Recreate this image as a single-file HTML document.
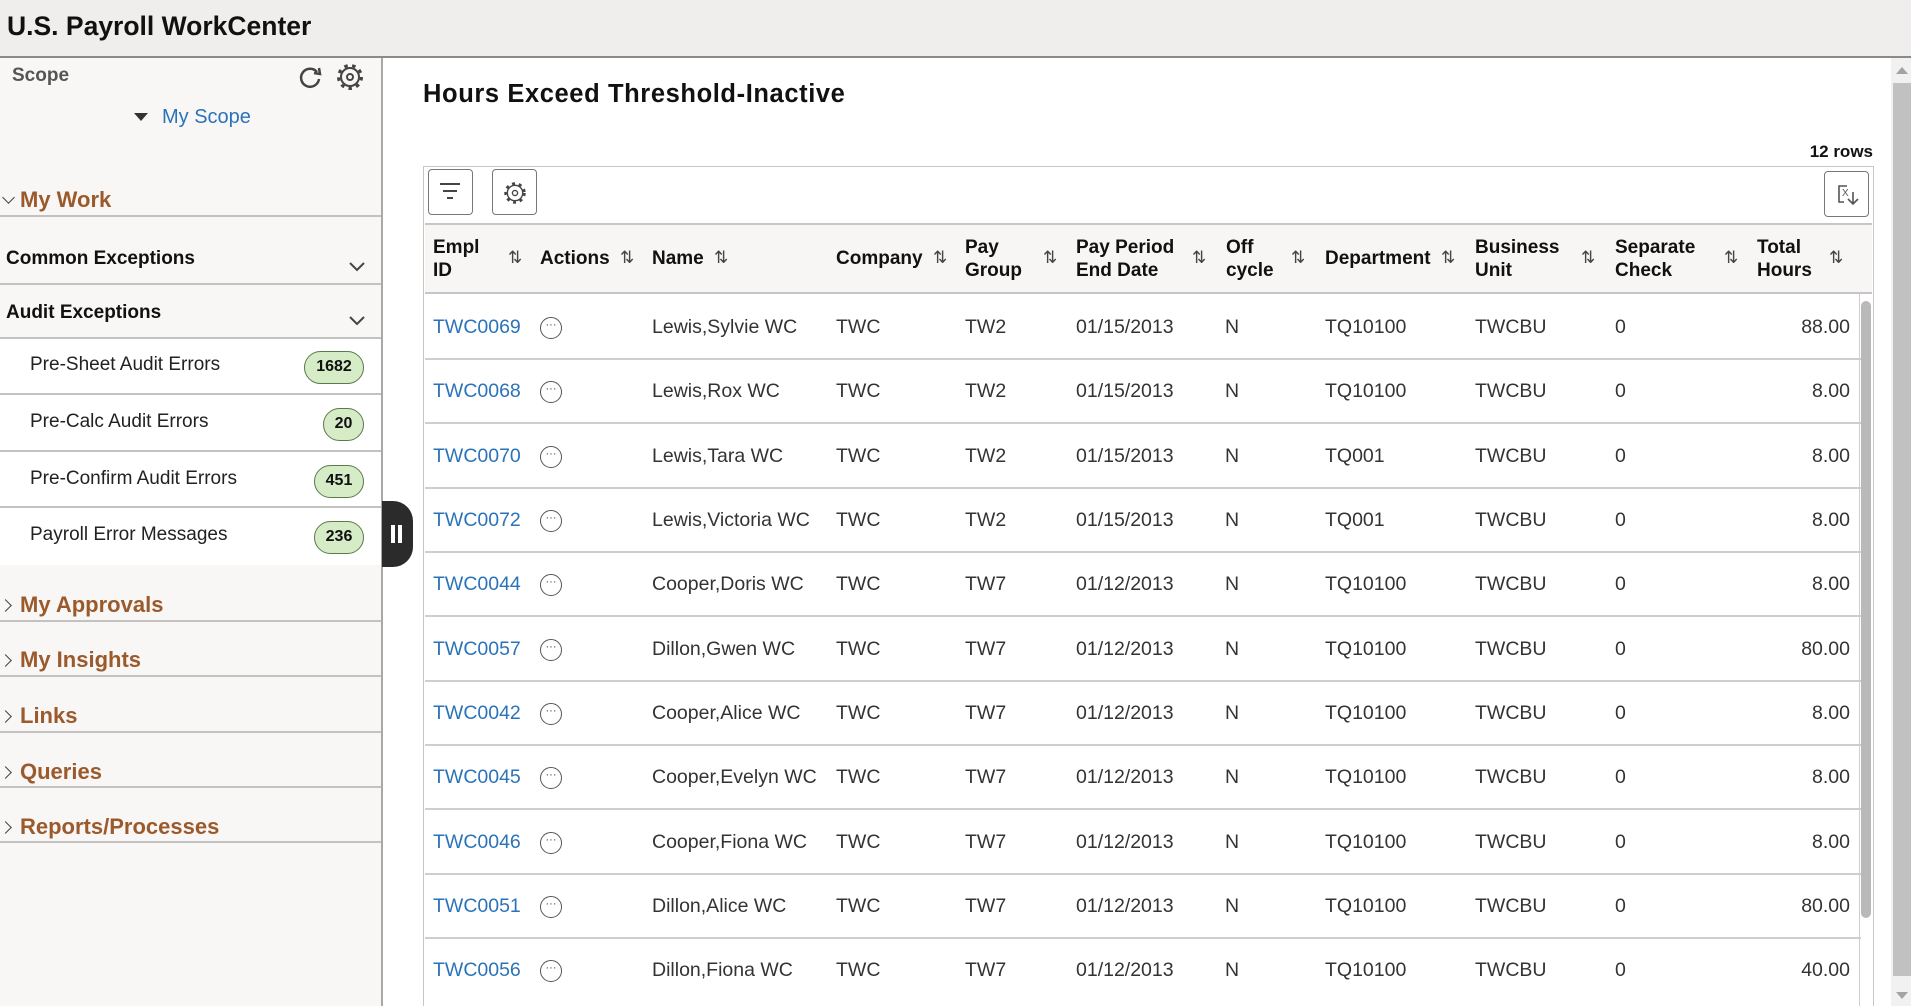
<!DOCTYPE html>
<html><head><meta charset="utf-8"><style>
*{margin:0;padding:0;box-sizing:border-box}
body{width:1911px;height:1006px;overflow:hidden;font-family:"Liberation Sans",Arial,sans-serif;background:#fff;position:relative;color:#333}
.a{position:absolute;white-space:nowrap}
#hdr{left:0;top:0;width:1911px;height:58px;background:#efeeed;border-bottom:2px solid #8a8a8a}
#side{left:0;top:58px;width:383px;height:948px;background:#f8f7f6;border-right:2px solid #a8a8a8}
.sec{position:absolute;left:0;width:381px;border-bottom:2px solid #c4c2c0}
.brown{color:#9b5a2c;font-weight:bold;font-size:22px}
.item{position:absolute;left:0;width:381px;background:#fff;border-bottom:2px solid #c4c2c0}
.badge{position:absolute;right:17px;height:33px;border:1.5px solid #5a7a4a;background:#d5ecc6;border-radius:17px;font-weight:bold;font-size:16px;color:#111;text-align:center;line-height:30px}
.th{position:absolute;top:236px;font-weight:bold;font-size:19px;color:#111;line-height:23px}
.srt{position:absolute;top:248px;font-size:17px;color:#444}
.row{position:absolute;left:425px;width:1436px;height:64px;border-bottom:2px solid #d0cecc;font-size:19.5px;color:#333}
.row span{position:absolute;top:20px;white-space:nowrap}
.lk{color:#2b73b8}
.dot{width:22px;height:22px;border:1.5px solid #555;border-radius:50%;top:21px!important;font-size:11px;line-height:14px;text-align:center;color:#444}
.chev{position:absolute;left:4px;width:9px;height:9px;border-top:1.6px solid #444;border-right:1.6px solid #444;transform:rotate(45deg)}
</style></head><body>
<div id="hdr" class="a"><div class="a" style="left:7px;top:11px;font-size:26.5px;font-weight:bold;color:#111">U.S. Payroll WorkCenter</div></div>
<div id="side" class="a">
<div class="a" style="left:12px;top:7px;font-size:19px;font-weight:bold;color:#555">Scope</div>
<svg class="a" style="left:297px;top:6px" width="26" height="26" viewBox="0 0 26 26"><path d="M20 8 A9 9 0 1 0 22 15" fill="none" stroke="#444" stroke-width="2.5"/><path d="M17 9 L23 10 L22 4" fill="none" stroke="#444" stroke-width="2.5"/></svg>
<svg class="a" style="left:336px;top:5px" width="28" height="28" viewBox="0 0 28 28"><circle cx="14" cy="14" r="9" fill="none" stroke="#444" stroke-width="2"/><circle cx="14" cy="14" r="3" fill="none" stroke="#444" stroke-width="2"/><circle cx="14" cy="14" r="11.5" fill="none" stroke="#444" stroke-width="3" stroke-dasharray="3.5 4.5"/></svg>
<div class="a" style="left:134px;top:55px;width:0;height:0;border-left:7px solid transparent;border-right:7px solid transparent;border-top:8px solid #333"></div>
<div class="a" style="left:162px;top:48px;font-size:20px;color:#2b73b8">My Scope</div>
<div class="sec" style="top:125px;height:34px"><div class="chev" style="top:10px;transform:rotate(135deg)"></div><span class="a brown" style="left:20px;top:4px">My Work</span></div>
<div class="sec" style="top:159px;height:68px"><span class="a" style="left:6px;top:31px;font-size:19px;font-weight:bold;color:#111">Common Exceptions</span><svg class="a" style="left:349px;top:45px" width="16" height="10"><path d="M1 1 L8 8 L15 1" fill="none" stroke="#444" stroke-width="2"/></svg></div>
<div class="sec" style="top:227px;height:54px"><span class="a" style="left:6px;top:17px;font-size:19px;font-weight:bold;color:#111">Audit Exceptions</span><svg class="a" style="left:349px;top:31px" width="16" height="10"><path d="M1 1 L8 8 L15 1" fill="none" stroke="#444" stroke-width="2"/></svg></div>
<div class="item" style="top:281px;height:56px"><span class="a" style="left:30px;top:15px;font-size:19px;color:#222">Pre-Sheet Audit Errors</span><div class="badge" style="top:12px;width:60px">1682</div></div>
<div class="item" style="top:337px;height:57px"><span class="a" style="left:30px;top:16px;font-size:19px;color:#222">Pre-Calc Audit Errors</span><div class="badge" style="top:13px;width:41px">20</div></div>
<div class="item" style="top:394px;height:56px"><span class="a" style="left:30px;top:16px;font-size:19px;color:#222">Pre-Confirm Audit Errors</span><div class="badge" style="top:13px;width:50px">451</div></div>
<div class="item" style="top:450px;height:57px;border-bottom:none"><span class="a" style="left:30px;top:16px;font-size:19px;color:#222">Payroll Error Messages</span><div class="badge" style="top:13px;width:50px">236</div></div>
<div class="sec" style="top:527px;height:37px"><div class="chev" style="top:16px;left:1px"></div><span class="a brown" style="left:20px;top:7px">My Approvals</span></div>
<div class="sec" style="top:582px;height:37px"><div class="chev" style="top:16px;left:1px"></div><span class="a brown" style="left:20px;top:7px">My Insights</span></div>
<div class="sec" style="top:637px;height:38px"><div class="chev" style="top:17px;left:1px"></div><span class="a brown" style="left:20px;top:8px">Links</span></div>
<div class="sec" style="top:693px;height:37px"><div class="chev" style="top:17px;left:1px"></div><span class="a brown" style="left:20px;top:8px">Queries</span></div>
<div class="sec" style="top:748px;height:37px"><div class="chev" style="top:17px;left:1px"></div><span class="a brown" style="left:20px;top:8px">Reports/Processes</span></div>
</div>
<div class="a" style="left:382px;top:501px;width:31px;height:66px;background:#2b2b2b;border-radius:0 20px 20px 0"><div class="a" style="left:9px;top:24px;width:4px;height:18px;background:#fff"></div><div class="a" style="left:16px;top:24px;width:4px;height:18px;background:#fff"></div></div>

<div class="a" style="left:423px;top:80px;font-size:25.5px;letter-spacing:0.6px;font-weight:bold;color:#111">Hours Exceed Threshold-Inactive</div>
<div class="a" style="right:38px;top:142px;font-size:17px;font-weight:bold;color:#111">12 rows</div>
<div class="a" style="left:423px;top:166px;width:1451px;height:840px;border:1.5px solid #c8c6c4;border-bottom:none"></div>
<div class="a" style="left:428px;top:169px;width:45px;height:46px;border:1.5px solid #777;border-radius:4px;background:#fff"><div class="a" style="left:11px;top:13px;width:20px;height:2px;background:#444"></div><div class="a" style="left:14px;top:20px;width:14px;height:2px;background:#444"></div><div class="a" style="left:18px;top:27px;width:6px;height:2px;background:#444"></div></div>
<div class="a" style="left:492px;top:169px;width:45px;height:46px;border:1.5px solid #777;border-radius:4px;background:#fff"><svg class="a" style="left:10px;top:11px" width="24" height="24" viewBox="0 0 28 28"><circle cx="14" cy="14" r="9" fill="none" stroke="#444" stroke-width="1.6"/><circle cx="14" cy="14" r="11" fill="none" stroke="#444" stroke-width="3" stroke-dasharray="3.5 4.5"/><circle cx="14" cy="14" r="3" fill="none" stroke="#444" stroke-width="1.6"/></svg></div>
<div class="a" style="left:1824px;top:171px;width:45px;height:46px;border:1.5px solid #777;border-radius:4px;background:#fff"><svg class="a" style="left:11px;top:11px" width="24" height="24"><path d="M11 3 H3 V19 H8" fill="none" stroke="#555" stroke-width="1.6"/><text x="6" y="13" font-size="10" font-family="Liberation Sans" fill="#555">X</text><path d="M17 9 V21 M12 16 L17 21 L22 16" fill="none" stroke="#555" stroke-width="1.6"/></svg></div>
<div class="a" style="left:425px;top:223px;width:1447px;height:71px;background:#f7f6f5;border-top:2px solid #c8c6c4;border-bottom:2px solid #c8c6c4"></div>
<div class="th" style="left:433px">Empl<br>ID</div><div class="srt" style="left:508px">⇅</div>
<div class="th" style="left:540px;top:247px">Actions</div><div class="srt" style="left:620px">⇅</div>
<div class="th" style="left:652px;top:247px">Name</div><div class="srt" style="left:714px">⇅</div>
<div class="th" style="left:836px;top:247px">Company</div><div class="srt" style="left:933px">⇅</div>
<div class="th" style="left:965px">Pay<br>Group</div><div class="srt" style="left:1043px">⇅</div>
<div class="th" style="left:1076px">Pay Period<br>End Date</div><div class="srt" style="left:1192px">⇅</div>
<div class="th" style="left:1226px">Off<br>cycle</div><div class="srt" style="left:1291px">⇅</div>
<div class="th" style="left:1325px;top:247px">Department</div><div class="srt" style="left:1441px">⇅</div>
<div class="th" style="left:1475px">Business<br>Unit</div><div class="srt" style="left:1581px">⇅</div>
<div class="th" style="left:1615px">Separate<br>Check</div><div class="srt" style="left:1724px">⇅</div>
<div class="th" style="left:1757px">Total<br>Hours</div><div class="srt" style="left:1829px">⇅</div>

<div class="row" style="top:296px"><span class="lk" style="left:8px">TWC0069</span><span class="dot" style="left:115px">···</span><span style="left:227px">Lewis,Sylvie WC</span><span style="left:411px">TWC</span><span style="left:540px">TW2</span><span style="left:651px">01/15/2013</span><span style="left:800px">N</span><span style="left:900px">TQ10100</span><span style="left:1050px">TWCBU</span><span style="left:1190px">0</span><span style="right:11px">88.00</span></div>
<div class="row" style="top:360px"><span class="lk" style="left:8px">TWC0068</span><span class="dot" style="left:115px">···</span><span style="left:227px">Lewis,Rox WC</span><span style="left:411px">TWC</span><span style="left:540px">TW2</span><span style="left:651px">01/15/2013</span><span style="left:800px">N</span><span style="left:900px">TQ10100</span><span style="left:1050px">TWCBU</span><span style="left:1190px">0</span><span style="right:11px">8.00</span></div>
<div class="row" style="top:425px"><span class="lk" style="left:8px">TWC0070</span><span class="dot" style="left:115px">···</span><span style="left:227px">Lewis,Tara WC</span><span style="left:411px">TWC</span><span style="left:540px">TW2</span><span style="left:651px">01/15/2013</span><span style="left:800px">N</span><span style="left:900px">TQ001</span><span style="left:1050px">TWCBU</span><span style="left:1190px">0</span><span style="right:11px">8.00</span></div>
<div class="row" style="top:489px"><span class="lk" style="left:8px">TWC0072</span><span class="dot" style="left:115px">···</span><span style="left:227px">Lewis,Victoria WC</span><span style="left:411px">TWC</span><span style="left:540px">TW2</span><span style="left:651px">01/15/2013</span><span style="left:800px">N</span><span style="left:900px">TQ001</span><span style="left:1050px">TWCBU</span><span style="left:1190px">0</span><span style="right:11px">8.00</span></div>
<div class="row" style="top:553px"><span class="lk" style="left:8px">TWC0044</span><span class="dot" style="left:115px">···</span><span style="left:227px">Cooper,Doris WC</span><span style="left:411px">TWC</span><span style="left:540px">TW7</span><span style="left:651px">01/12/2013</span><span style="left:800px">N</span><span style="left:900px">TQ10100</span><span style="left:1050px">TWCBU</span><span style="left:1190px">0</span><span style="right:11px">8.00</span></div>
<div class="row" style="top:618px"><span class="lk" style="left:8px">TWC0057</span><span class="dot" style="left:115px">···</span><span style="left:227px">Dillon,Gwen WC</span><span style="left:411px">TWC</span><span style="left:540px">TW7</span><span style="left:651px">01/12/2013</span><span style="left:800px">N</span><span style="left:900px">TQ10100</span><span style="left:1050px">TWCBU</span><span style="left:1190px">0</span><span style="right:11px">80.00</span></div>
<div class="row" style="top:682px"><span class="lk" style="left:8px">TWC0042</span><span class="dot" style="left:115px">···</span><span style="left:227px">Cooper,Alice WC</span><span style="left:411px">TWC</span><span style="left:540px">TW7</span><span style="left:651px">01/12/2013</span><span style="left:800px">N</span><span style="left:900px">TQ10100</span><span style="left:1050px">TWCBU</span><span style="left:1190px">0</span><span style="right:11px">8.00</span></div>
<div class="row" style="top:746px"><span class="lk" style="left:8px">TWC0045</span><span class="dot" style="left:115px">···</span><span style="left:227px">Cooper,Evelyn WC</span><span style="left:411px">TWC</span><span style="left:540px">TW7</span><span style="left:651px">01/12/2013</span><span style="left:800px">N</span><span style="left:900px">TQ10100</span><span style="left:1050px">TWCBU</span><span style="left:1190px">0</span><span style="right:11px">8.00</span></div>
<div class="row" style="top:811px"><span class="lk" style="left:8px">TWC0046</span><span class="dot" style="left:115px">···</span><span style="left:227px">Cooper,Fiona WC</span><span style="left:411px">TWC</span><span style="left:540px">TW7</span><span style="left:651px">01/12/2013</span><span style="left:800px">N</span><span style="left:900px">TQ10100</span><span style="left:1050px">TWCBU</span><span style="left:1190px">0</span><span style="right:11px">8.00</span></div>
<div class="row" style="top:875px"><span class="lk" style="left:8px">TWC0051</span><span class="dot" style="left:115px">···</span><span style="left:227px">Dillon,Alice WC</span><span style="left:411px">TWC</span><span style="left:540px">TW7</span><span style="left:651px">01/12/2013</span><span style="left:800px">N</span><span style="left:900px">TQ10100</span><span style="left:1050px">TWCBU</span><span style="left:1190px">0</span><span style="right:11px">80.00</span></div>
<div class="row" style="top:939px;border-bottom:none"><span class="lk" style="left:8px">TWC0056</span><span class="dot" style="left:115px">···</span><span style="left:227px">Dillon,Fiona WC</span><span style="left:411px">TWC</span><span style="left:540px">TW7</span><span style="left:651px">01/12/2013</span><span style="left:800px">N</span><span style="left:900px">TQ10100</span><span style="left:1050px">TWCBU</span><span style="left:1190px">0</span><span style="right:11px">40.00</span></div>

<div class="a" style="left:1859px;top:294px;width:1px;height:712px;background:#d0cecc"></div>
<div class="a" style="left:1861px;top:301px;width:10px;height:617px;background:#b9b9b9;border-radius:5px"></div>
<div class="a" style="left:1891px;top:58px;width:20px;height:948px;background:#f1f1f1"></div>
<div class="a" style="left:1896px;top:67px;width:0;height:0;border-left:6px solid transparent;border-right:6px solid transparent;border-bottom:7px solid #a3a3a3"></div>
<div class="a" style="left:1893px;top:83px;width:18px;height:893px;background:#c1c1c1"></div>
<div class="a" style="left:1896px;top:992px;width:0;height:0;border-left:6px solid transparent;border-right:6px solid transparent;border-top:7px solid #a3a3a3"></div>
</body></html>
